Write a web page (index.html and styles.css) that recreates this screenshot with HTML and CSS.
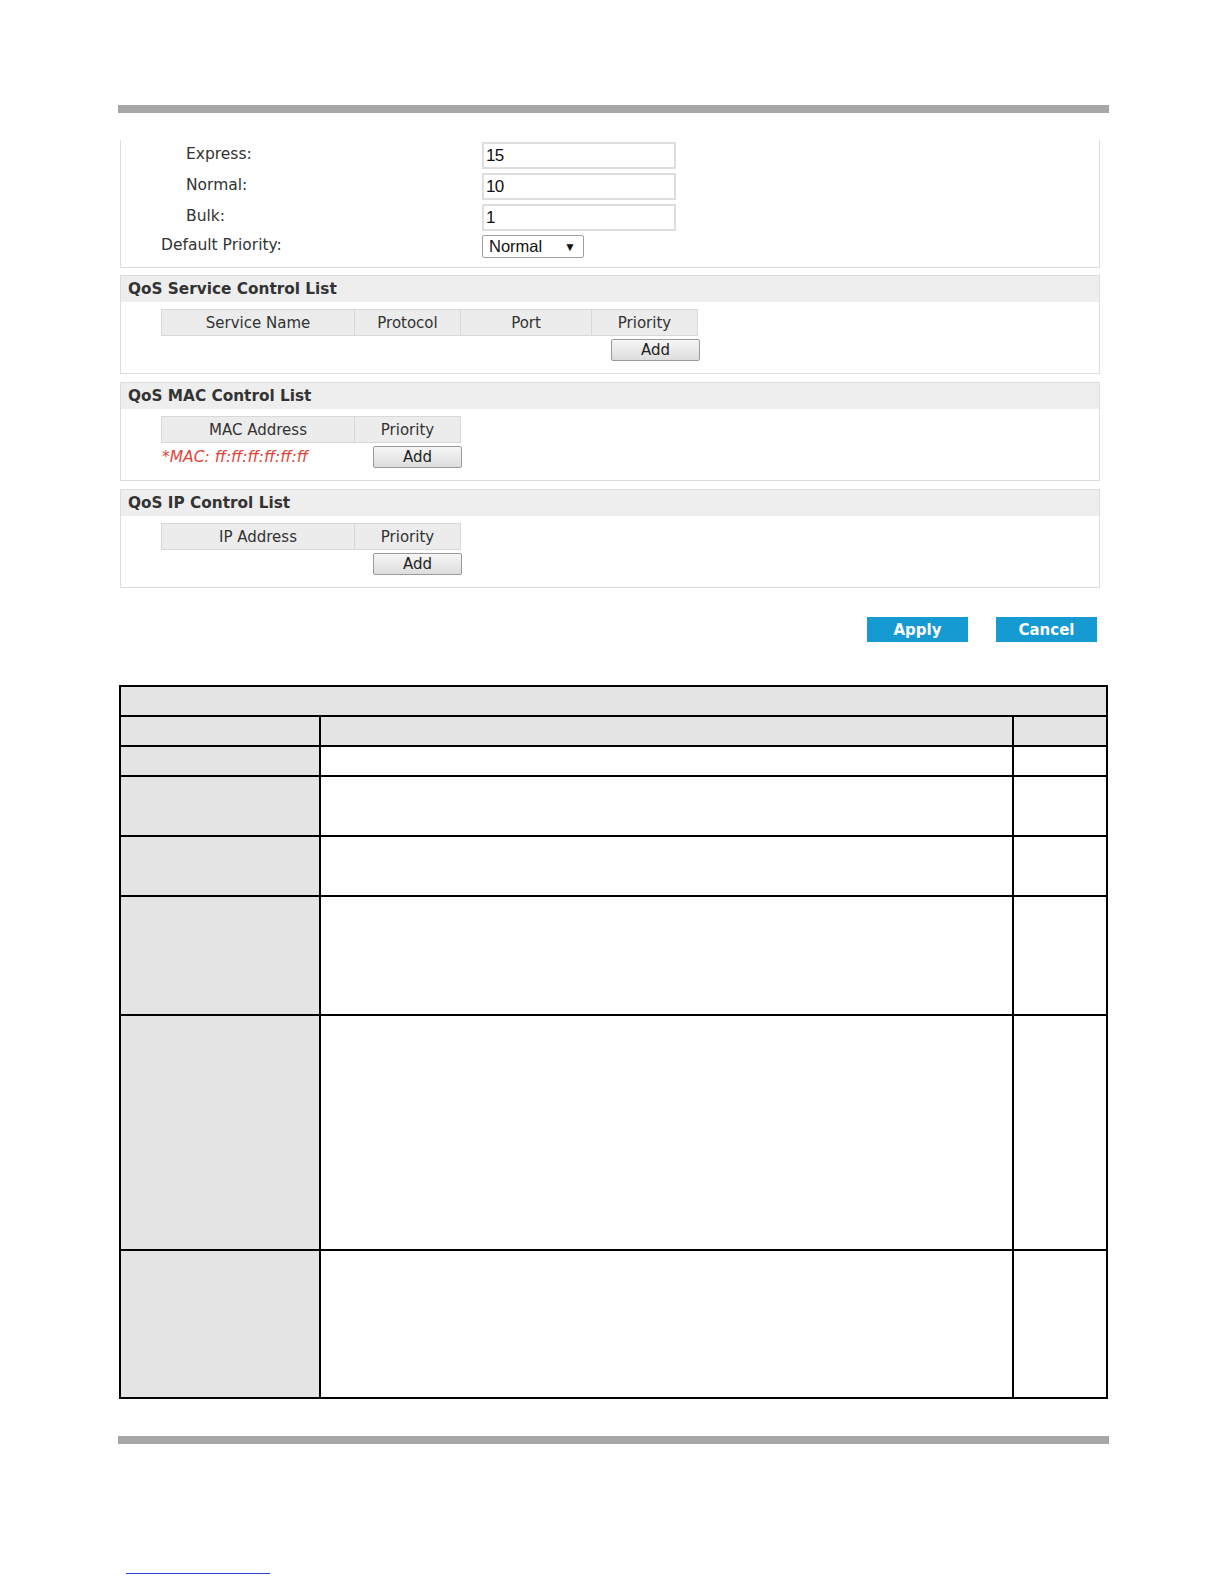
FILE: index.html
```html
<!DOCTYPE html>
<html>
<head>
<meta charset="utf-8">
<link rel="stylesheet" href="styles.css">
</head>
<body>
<div class="page">
  <div class="bar bar-top"></div>

  <div class="panel panel-first">
    <div class="frow">
      <span class="flabel sub">Express:</span>
      <span class="tinput">15</span>
    </div>
    <div class="frow">
      <span class="flabel sub">Normal:</span>
      <span class="tinput">10</span>
    </div>
    <div class="frow">
      <span class="flabel sub">Bulk:</span>
      <span class="tinput">1</span>
    </div>
    <div class="frow frow-sel">
      <span class="flabel">Default Priority:</span>
      <span class="tselect">Normal<span class="arrow">&#9660;</span></span>
    </div>
  </div>

  <div class="panel section">
    <div class="sec-head">QoS Service Control List</div>
    <div class="sec-body">
      <div class="cells">
        <div class="cell w-name">Service Name</div>
        <div class="cell w-proto">Protocol</div>
        <div class="cell w-port">Port</div>
        <div class="cell w-prio">Priority</div>
      </div>
      <div class="foot foot-service">
        <span></span>
        <span class="btn-add">Add</span>
      </div>
    </div>
  </div>

  <div class="panel section">
    <div class="sec-head">QoS MAC Control List</div>
    <div class="sec-body">
      <div class="cells">
        <div class="cell w-name">MAC Address</div>
        <div class="cell w-proto">Priority</div>
      </div>
      <div class="foot foot-small">
        <span class="hint">*MAC: ff:ff:ff:ff:ff:ff</span>
        <span class="btn-add">Add</span>
      </div>
    </div>
  </div>

  <div class="panel section">
    <div class="sec-head">QoS IP Control List</div>
    <div class="sec-body">
      <div class="cells">
        <div class="cell w-name">IP Address</div>
        <div class="cell w-proto">Priority</div>
      </div>
      <div class="foot foot-small">
        <span></span>
        <span class="btn-add">Add</span>
      </div>
    </div>
  </div>

  <div class="actions">
    <span class="btn-blue">Apply</span>
    <span class="btn-blue">Cancel</span>
  </div>

  <table class="doc">
    <colgroup>
      <col class="c1"><col class="c2"><col class="c3">
    </colgroup>
    <tr class="r30 gray"><td colspan="3"></td></tr>
    <tr class="r30 gray"><td></td><td></td><td></td></tr>
    <tr class="r30"><td class="g"></td><td></td><td></td></tr>
    <tr class="r60"><td class="g"></td><td></td><td></td></tr>
    <tr class="r60"><td class="g"></td><td></td><td></td></tr>
    <tr class="r119"><td class="g"></td><td></td><td></td></tr>
    <tr class="r235"><td class="g"></td><td></td><td></td></tr>
    <tr class="r148"><td class="g"></td><td></td><td></td></tr>
  </table>

  <div class="bar bar-bottom"></div>

  <div class="link-line"></div>
</div>
</body>
</html>
```

FILE: styles.css
```css
html, body {
  margin: 0;
  padding: 0;
  background: #ffffff;
}

body {
  font-family: "DejaVu Sans", "Liberation Sans", sans-serif;
  font-size: 15px;
  color: #222;
}

.page {
  width: 991px;
  margin-left: 118px;
  padding-top: 105px;
  padding-bottom: 4px;
}

.bar {
  height: 8px;
  background: #a6a6a6;
}

.panel {
  margin-left: 2px;
  width: 980px;
  border: 1px solid #dcdcdc;
  box-sizing: border-box;
}

.panel-first {
  margin-top: 27px;
  border-top: none;
  height: 128px;
  padding-top: 2px;
  display: flex;
  flex-direction: column;
  gap: 4px;
}

.frow {
  display: flex;
  align-items: center;
  height: 27px;
}

.frow-sel {
  height: 23px;
}

.flabel {
  width: 361px;
  padding-left: 40px;
  box-sizing: border-box;
  margin-top: -3px;
  color: #333;
  font-size: 15.5px;
}

.flabel.sub {
  padding-left: 65px;
}

.tinput {
  width: 194px;
  height: 27px;
  border: 2px solid #dedede;
  box-sizing: border-box;
  padding-left: 2px;
  display: flex;
  align-items: center;
  font-family: "Liberation Sans", Arial, sans-serif;
  font-size: 17px;
  color: #111;
  letter-spacing: -0.6px;
}

.tselect {
  width: 102px;
  height: 23px;
  border: 1px solid #a0a0a0;
  border-radius: 2px;
  box-sizing: border-box;
  padding-left: 6px;
  padding-right: 7px;
  display: flex;
  align-items: center;
  justify-content: space-between;
  font-family: "Liberation Sans", Arial, sans-serif;
  font-size: 16.5px;
  color: #111;
}

.arrow {
  font-size: 12px;
  color: #111;
}

.section {
  margin-top: 7px;
  height: 99px;
}

.section + .section {
  margin-top: 8px;
}

.sec-head {
  height: 26px;
  background: #eeeeee;
  font-weight: bold;
  font-size: 15.3px;
  color: #333;
  padding-left: 7px;
  display: flex;
  align-items: center;
}

.sec-body {
  padding-top: 7px;
  padding-left: 40px;
}

.cells {
  display: flex;
  height: 27px;
}

.cell {
  height: 27px;
  box-sizing: border-box;
  background: #ececec;
  border: 1px solid #d8d8d8;
  border-left: none;
  display: flex;
  align-items: center;
  justify-content: center;
  color: #333;
  font-size: 15px;
}

.cell:first-child {
  border-left: 1px solid #d8d8d8;
}

.w-name { width: 194px; }
.w-proto { width: 106px; }
.w-port { width: 131px; }
.w-prio { width: 106px; }

.foot {
  display: flex;
  justify-content: space-between;
  align-items: center;
  margin-top: 3px;
  height: 22px;
}

.foot-service { width: 539px; }
.foot-small { width: 301px; }

.hint {
  color: #e0453c;
  font-style: italic;
  padding-left: 1px;
  font-size: 15.5px;
}

.btn-add {
  width: 89px;
  height: 22px;
  box-sizing: border-box;
  border: 1px solid #9a9a9a;
  border-radius: 2px;
  background: linear-gradient(#f6f6f6, #dddddd);
  display: flex;
  align-items: center;
  justify-content: center;
  color: #222;
  font-size: 15px;
}

.actions {
  display: flex;
  justify-content: flex-end;
  gap: 28px;
  padding-right: 12px;
  margin-top: 29px;
}

.btn-blue {
  width: 101px;
  height: 25px;
  background: #159ad2;
  color: #ffffff;
  font-weight: bold;
  font-size: 15px;
  display: flex;
  align-items: center;
  justify-content: center;
}

.doc {
  margin-top: 43px;
  margin-left: 1px;
  width: 989px;
  border-collapse: collapse;
  table-layout: fixed;
  border: 2px solid #000;
}

.doc td {
  border: 2px solid #000;
  padding: 0;
}

.c1 { width: 200px; }
.c3 { width: 94px; }

.gray td, .doc td.g {
  background: #e4e4e4;
}

.r30 { height: 30px; }
.r60 { height: 60px; }
.r119 { height: 119px; }
.r235 { height: 235px; }
.r148 { height: 148px; }

.bar-bottom {
  margin-top: 37px;
  height: 8px;
}

.link-line {
  margin-top: 129px;
  margin-left: 8px;
  width: 144px;
  height: 1px;
  background: #2b3fd6;
}
```
